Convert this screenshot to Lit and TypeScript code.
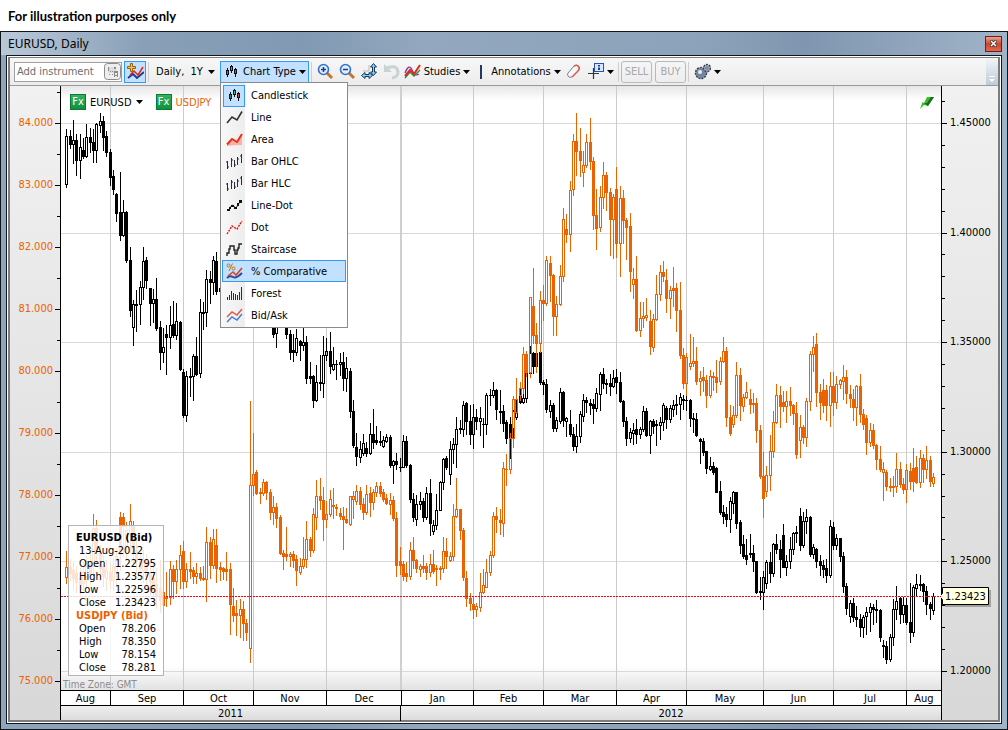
import { LitElement, html, css, svg, nothing } from "lit";
import type { SVGTemplateResult } from "lit";
import { customElement, property, state } from "lit/decorators.js";
import { classMap } from "lit/directives/class-map.js";

/* ---------- daily candles: direction, then high,top,bottom,low ---------- */

const EURUSD = `
u129,136,184,187 d130,136,144,148 u120,140,144,163 d134,140,160,175 u134,147,160,178 d138,150,156,158
u124,137,156,157 d128,137,142,152 d129,142,150,162 u123,124,150,162 u113,121,125,132 d116,121,137,150
d131,136,152,156 d149,152,177,185 d170,176,189,194 d193,194,213,221 d172,212,235,240 u200,212,235,236
d211,212,260,262 d247,260,310,316 u300,304,327,345 d290,304,305,331 u281,287,304,324 u247,261,287,299
d257,260,280,288 d288,288,303,325 u289,299,303,322 d278,299,328,330 d321,327,352,369 u328,347,352,362
d325,334,337,374 u306,325,337,348 d301,324,335,337 u303,321,335,339 d321,322,369,370 d369,372,415,417
u371,376,415,421 d368,376,377,396 u354,356,376,400 d337,356,374,375 u299,312,373,377 d302,312,313,329
u270,279,312,326 d271,279,282,303 u256,260,282,294 d252,261,291,294 d280,288,291,300 u262,270,290,296
u250,256,270,280 d246,256,268,275 u240,248,268,272 u225,230,248,255 d220,230,240,250 u210,216,240,246
u200,206,216,224 d196,206,222,230 d214,222,236,240 u212,220,236,242 d215,220,250,256 d244,250,272,280
d266,272,296,304 d290,296,312,318 d310,318,334,337 u306,312,333,347 d304,312,318,324 d306,314,320,326
d310,318,334,338 d330,334,352,359 d334,350,352,361 u329,338,352,355 d340,341,345,360 u328,342,345,350
d336,342,378,383 d362,376,378,383 d375,376,400,407 u365,382,400,401 d355,382,383,390 u336,355,383,397
u338,351,355,360 d332,351,366,373 u347,364,369,370 d360,364,364,379 u353,362,364,375 d352,362,378,390
u357,368,378,391 d368,371,411,417 d400,411,445,447 d433,447,456,465 u441,449,457,462 u434,443,453,455
d442,448,453,456 u423,434,453,454 d409,434,442,448 d426,440,442,444 d431,441,442,445 u436,440,446,447
u434,437,441,442 d435,437,465,467 u460,461,465,483 d453,461,464,469 d458,467,467,471 u435,441,467,467
d436,441,465,467 d464,465,499,502 d493,499,517,521 u495,504,519,525 u492,501,504,509 d498,501,517,521
u487,493,517,519 d479,493,523,535 u520,525,531,534 u494,510,525,529 u481,482,510,510 u458,459,482,489
d456,458,467,469 u441,449,474,484 u438,444,449,463 u417,429,444,467 d420,428,429,433 u401,405,429,436
d402,403,421,434 d405,421,434,444 u404,417,434,448 d409,417,421,429 u407,418,421,435 d418,424,424,447
u393,395,424,434 d389,395,395,405 u382,390,395,397 d389,390,409,419 d390,411,412,423 d405,411,423,431
d420,422,438,443 d417,424,438,458 u410,411,428,438 u395,412,417,419 d389,394,402,403 u393,398,402,403
u372,373,398,402 u346,353,373,376 d352,353,366,373 d352,353,366,370 d352,352,382,384 d380,382,384,394
d379,384,409,412 u400,405,411,417 d403,405,428,431 u417,420,428,431 u388,392,421,423 d391,392,420,426
u417,418,421,436 d410,424,434,436 d427,434,446,450 u424,436,446,452 u411,414,436,442 u394,400,416,421
d397,400,402,412 d399,403,405,414 d399,404,408,423 u388,393,408,411 u372,374,394,410 d368,374,383,388
d379,383,384,393 d374,383,386,395 u370,378,386,387 d369,377,382,393 d372,382,401,402 d400,401,421,426
d417,421,438,445 u428,432,438,442 u423,430,433,444 d419,429,434,443 u427,429,434,438 u406,411,429,431
d408,411,435,436 u420,421,435,453 d419,421,426,433 d420,424,425,445 u417,422,425,439 u403,405,422,430
d406,408,419,428 u405,408,419,422 u400,405,409,416 d395,404,405,414 u393,397,404,419 d395,399,400,409
d395,400,400,410 d399,400,418,426 d413,418,419,432 d413,419,435,436 d438,439,441,463 d438,441,452,455
d451,451,468,473 u457,466,469,470 d462,466,472,474 d467,468,492,492 d481,491,512,514 d505,512,516,523
d507,514,519,526 u497,501,519,532 u491,492,503,513 d492,492,523,528 d520,522,545,553 d535,544,556,558
d539,555,559,564 d534,553,554,557 d545,553,561,571 d561,561,592,593 d577,591,592,599 u571,577,592,609
u560,562,583,588 d552,562,573,582 u543,544,573,576 d534,544,549,553 d540,549,559,577 d524,535,567,567
u555,561,567,575 u537,549,561,568 u532,533,549,554 d526,532,533,542 d508,516,545,550 u512,521,545,547
u509,517,521,533 d516,517,554,556 u544,547,554,558 d548,549,561,567 d555,561,565,575 d560,565,569,577
d559,568,575,582 u520,526,575,577 d522,527,545,549 u534,538,545,549 d538,538,556,561 d552,556,586,592
d583,586,608,614 u600,603,616,622 d598,603,617,621 d606,617,619,626 d614,619,627,636 u615,617,627,637
u607,612,616,634 u603,607,612,631 d604,607,609,624 d600,609,610,622 d609,610,637,641 d640,645,646,657
d641,646,659,663 u634,637,659,661 u599,609,637,645 u586,601,609,619 d597,598,614,623 u597,605,614,622
d598,605,622,624 d583,622,632,642 u585,587,632,636 u574,584,588,596 d575,584,585,590 d583,584,591,601
d586,591,604,614 d602,604,608,619 u593,596,610,614`;

const USDJPY = `
u551,567,577,583 d559,567,573,580 d562,570,578,588 d566,573,582,592 d568,578,584,594 u562,572,583,590
u556,566,576,586 d552,564,574,584 u514,528,566,580 d520,528,552,566 d545,552,568,580 d556,566,576,586
u560,570,578,590 d562,572,580,588 u558,566,580,590 u548,556,572,584 d512,517,554,570 d513,517,526,556
u522,530,545,560 u504,521,534,552 d521,526,552,566 d540,550,560,572 d552,558,568,580 u550,562,570,582
d554,564,576,588 d560,572,582,594 d564,578,590,602 d568,584,596,608 d560,588,600,612 d560,592,605,607
d572,597,598,606 u561,569,597,604 d565,569,581,598 u560,569,581,593 u545,555,569,588 d541,551,581,588
u563,569,581,587 d552,569,571,578 d567,570,576,583 u563,573,576,583 d567,573,578,580 d566,578,579,580
u527,542,579,601 d537,542,565,578 u529,539,565,568 d529,545,568,582 d562,567,569,580 d567,568,571,579
d552,569,571,580 d563,569,604,634 d588,606,615,621 d600,613,615,635 u599,609,615,637 d601,609,623,640
d619,623,632,640 u401,485,648,662 u433,474,485,495 d470,472,493,494 d488,492,493,503 u479,482,493,495
d481,482,492,499 d489,492,512,519 u496,507,512,524 d503,507,518,527 d515,517,553,554 d550,553,556,569
d527,554,556,560 u552,554,556,566 d551,554,560,567 d555,559,570,585 u558,566,572,574 u537,559,566,568
u521,539,559,567 d537,539,550,556 u508,514,550,552 u480,496,517,529 d478,496,500,509 d487,500,519,540
u501,514,519,527 u490,499,514,516 d488,505,506,518 d504,507,508,515 d508,513,516,519 d507,516,519,549
d508,519,522,523 u496,496,524,525 u491,496,499,518 u485,491,501,504 d487,491,504,509 d498,504,512,519
u485,494,512,514 d487,493,502,516 u489,492,502,509 u482,486,492,496 d482,486,493,496 d489,492,499,501
d494,498,503,504 u493,500,504,514 d496,500,518,520 d512,518,565,576 d547,561,565,574 d561,564,576,580
d562,573,576,581 u542,550,576,579 d537,550,560,568 d559,560,568,572 u564,566,569,576 d555,566,568,572
d563,566,572,579 u554,564,572,576 d550,564,571,573 d565,568,569,585 d566,568,569,579 u537,551,568,572
d538,551,556,568 u552,556,560,561 u504,516,556,560 u478,509,516,517 d509,509,530,539 d528,530,577,580
d571,578,598,606 d593,598,603,610 d597,604,609,618 u603,606,609,616 u573,592,607,611 u569,585,592,593
u559,572,587,587 u551,555,572,575 u512,516,555,557 d507,516,519,532 d509,520,522,534 u462,468,523,536
d454,469,469,485 u433,438,469,473 u396,399,438,447 u378,399,412,413 u382,388,395,400 u347,354,388,393
d351,354,372,376 u297,297,372,377 d268,306,335,343 d323,335,343,372 u291,300,343,352 d285,300,303,320
u256,260,303,305 d256,263,275,301 d274,275,316,335 u296,304,316,335 u265,276,304,305 u208,219,276,281
d214,229,234,242 u181,190,234,251 u134,141,189,195 d113,141,151,175 d128,151,160,176 u151,165,172,186
u134,142,165,167 d118,142,161,169 d157,161,215,229 d189,215,228,249 u186,197,227,231 u162,175,197,208
d172,175,192,210 d188,192,219,255 u194,197,219,258 d167,189,243,257 u186,198,243,276 d190,198,220,243
d218,220,227,259 d213,226,271,291 u268,279,284,298 d256,279,330,331 u302,318,330,336 u302,316,318,327
u298,315,317,320 d310,321,346,354 u314,319,347,351 u275,294,319,320 u265,272,294,300 d261,272,276,281
d269,280,298,312 u286,290,298,318 d267,288,290,306 d283,288,310,331 d282,310,355,358 d348,355,383,388
u353,357,383,395 u334,363,366,369 u337,361,363,366 d347,361,381,384 u371,378,381,395 d367,377,380,391
d375,380,395,407 u370,376,395,397 d372,376,377,390 d360,377,382,392 u357,361,381,384 u337,351,361,362
d347,351,417,426 d405,417,433,435 u406,415,424,427 u362,375,415,417 d368,375,405,420 u394,397,406,411
u382,392,397,398 d389,399,404,413 d393,403,404,412 d398,403,430,442 d425,430,476,478 d452,476,498,517
u466,475,491,496 u435,451,475,490 u411,422,451,457 u384,395,422,423 d386,395,406,427 d391,402,406,411
u391,401,406,422 d387,401,405,415 d404,405,413,424 d402,413,454,458 u415,427,440,457 d425,427,437,443
u398,401,437,446 u351,354,401,410 u336,347,354,371 d333,344,392,406 d384,392,402,419 d379,390,405,412
d385,390,405,420 u372,386,405,426 d372,386,402,415 u376,384,402,408 u379,380,384,388 u365,377,381,399
d370,377,393,403 d385,394,398,407 d389,399,407,420 u385,386,407,425 d374,386,414,422 d409,414,424,429
d415,418,442,454 u423,430,442,446 d424,430,445,448 d444,445,459,469 d446,459,469,471 u462,469,472,500
d470,472,486,490 d478,486,487,491 d476,486,487,496 u453,469,486,492 d462,469,484,487 d478,484,489,493
u464,470,489,502 d463,471,481,489 d448,468,481,491 d456,467,482,483 u450,458,482,487 d454,458,469,482
u446,460,469,478 d456,460,481,486 u473,477,483,486`;

/* Turns a candle list into one path; bodies are 3 units wide, wicks 1. */
function candlePath(source: string): string {
  const box = (x: number, y: number, w: number, h: number) =>
    h > 0 ? `M${x} ${y}h${w}v${h}h${-w}z` : "";
  return source
    .trim()
    .split(/\s+/)
    .map((item, i) => {
      const x = Math.floor((200 + 10 * i) / 3);
      const [high, top, bottom, low] = item.slice(1).split(",").map(Number);
      const wicks = box(x, high, 1, top - high) + box(x, bottom + 1, 1, low - bottom);
      if (item[0] === "d" || bottom - top < 2) {
        return wicks + box(x - 1, top, 3, bottom - top + 1);
      }
      return (
        wicks +
        box(x - 1, top, 3, 1) +
        box(x - 1, bottom, 3, 1) +
        box(x - 1, top + 1, 1, bottom - top - 1) +
        box(x + 1, top + 1, 1, bottom - top - 1)
      );
    })
    .join("");
}

const range = (from: number, to: number, step: number) => {
  const out: number[] = [];
  for (let v = from; v <= to; v += step) out.push(Math.round(v));
  return out;
};

/* ---------- icons ---------- */

const candles = svg`
  <path d="M4.500 5v9M8.500 2v8M12.500 5v9" stroke="#111"/>
  <rect x="3.500" y="7.500" width="2" height="4" fill="#2a9a5a" stroke="#111"/>
  <rect x="7.500" y="3.500" width="2" height="4" fill="#35c46a" stroke="#111"/>
  <rect x="11.500" y="6.500" width="2" height="4" fill="#e03c3c" stroke="#111"/>`;

const bars = svg`<path d="M1.500 8v8M2 14h1M0 9h1M5.500 5v9M6 7h1M8.500 7v7M9 12h1M11.500 4v8M12 6h1M15.500 1v9M14 3h1" stroke="#2a2a4a" fill="none"/>`;

const ICONS: Record<string, SVGTemplateResult> = {
  candles,
  line: svg`<path d="M1 14 6 8l5 3 5-8.500" fill="none" stroke="#333" stroke-width="1.600"/>`,
  area: svg`<path d="M1 13 6 8l5 3 5-8v11q-8 0-15 1z" fill="#f9b0a8"/><path d="M1 13.500 6 8l5 3 5-8" fill="none" stroke="#e8301c" stroke-width="2"/>`,
  bars,
  linedot: svg`<path d="M2 14 6 8l4 3 5-8" fill="none" stroke="#111"/><path d="M1 12h3v2H1zM3 10h2v2H3zM5 8h3v2H5zM8 10h3v2H8zM11 6h2v3h-2zM13 3h3v3h-3z" fill="#111"/>`,
  dot: svg`<path d="M1 15 6 7l5 3 5-8" fill="none" stroke="#d11" stroke-width="1.400" stroke-dasharray="2 1"/>`,
  stairs: svg`<path d="M1 15v-3h2V8h1V5h4v4h1v4h2V9h1V7h1V3h3" fill="none" stroke="#222" stroke-width="1.400"/>`,
  comparative: svg`
    <path d="M1 15q3-3 6-1t9-4" fill="none" stroke="#2b4b9b" stroke-width="2"/>
    <path d="M2 13 7 9l3 3 6-7" fill="none" stroke="#e0401c" stroke-width="1.600"/>
    <circle cx="2.500" cy="2.500" r="1.500" fill="none" stroke="#b97a10"/><circle cx="7.500" cy="5.500" r="1.500" fill="none" stroke="#b97a10"/>
    <path d="M6.500.5 3 8" stroke="#b97a10"/>`,
  forest: svg`<path d="M1.500 12v3M3.500 10v5M5.500 6v9M7.500 8v7M9.500 9v6M11.500 10v5M13.500 7v8M15.500 2v13" stroke="#2a2a4a"/>`,
  bidask: svg`<path d="M1 10 6 5l5 3 5-6" fill="none" stroke="#e8553c" stroke-width="1.400"/><path d="M1 15 6 10l5 3 5-6" fill="none" stroke="#4a78d8" stroke-width="1.400"/>`,
  keyboard: svg`
    <rect x=".5" y=".5" width="16" height="16" rx="3" fill="#eee" stroke="#8c8c8c"/>
    <path d="M4 4h8v6H4z" fill="#ddd"/><path d="M4 4h1v4H4zM6 8h1v1H6zM8 8h1v1H8zM10 4h2v2h-2zM5 11h1v1H5zM8 11h1v1H8zM10 8h4v2h-4zM10 10h1v4h-1zM13 10h1v4h-1zM11 12h2v1h-2z" fill="#8a8a8a"/>`,
  addseries: svg`
    <path d="M1 15 6 11l4 4 7-6" fill="none" stroke="#223a8c" stroke-width="2"/>
    <path d="M3 12 7 8l4 4 5-8" fill="none" stroke="#e02818" stroke-width="1.500"/>
    <path d="M3.500.5h2v3h3v2h-3v3h-2v-3h-3v-2h3z" fill="#f6c55a" stroke="#9a6206"/>`,
  zoomin: svg`
    <path d="m10 10 5 5" stroke="#c07830" stroke-width="3"/><circle cx="6.500" cy="6.500" r="5" fill="#dff0ff" stroke="#3a70c4" stroke-width="1.600"/>
    <path d="M4 6.500h5M6.500 4v5" stroke="#1a3a9a" stroke-width="1.500"/>`,
  zoomout: svg`
    <path d="m10 10 5 5" stroke="#c07830" stroke-width="3"/><circle cx="6.500" cy="6.500" r="5" fill="#dff0ff" stroke="#3a70c4" stroke-width="1.600"/>
    <path d="M4 6.500h5" stroke="#1a3a9a" stroke-width="1.500"/>`,
  fit: svg`
    <path d="M2 8h6v-6" fill="none" stroke="#bbb"/>
    <path d="m12.500.5 3 3.500h-2v5h2l-3 3.500-3-3.500h2V4h-2z" fill="#8ad0f0" stroke="#123a5c"/>
    <path d="m.5 12.500 3.500-3v2h4v-2l3.500 3-3.500 3v-2H4v2z" fill="#8ad0f0" stroke="#123a5c"/>`,
  undo: svg`<path d="M4 5q10-4 11 4 0 5-6 6" fill="none" stroke="#c9d3d6" stroke-width="3"/><path d="M1 1v8h8z" fill="#c9d3d6"/>`,
  studies: svg`
    <path d="M1 10q4-10 7-3t7 4" fill="none" stroke="#8a3ab0" stroke-width="1.400"/>
    <path d="M1 15 6 9l4 4 6-6" fill="none" stroke="#2a8a4a" stroke-width="1.400"/>
    <path d="M1 13 6 7l4 4 6-9" fill="none" stroke="#e02818" stroke-width="2"/>`,
  eraser: svg`
    <path d="M3 10 9 3q3-2 5 1 1 2-1 4l-6 6q-3 1-4-1t0-3z" fill="#f4f6fb" stroke="#7080a0"/>
    <path d="M9 3q3-2 5 1 1 2-1 4l-6 6" fill="none" stroke="#d85a48" stroke-width="1.500"/>`,
  crosshair: svg`
    <path d="M1 10.500h11M6.500 5v11" stroke="#333" stroke-width="1.200"/><rect x="7.500" y=".5" width="9" height="8" fill="#d8e8ff" stroke="#2a50b8"/>
    <path d="M12 2v1.500M12 4.500V7" stroke="#1a3ab0" stroke-width="2"/>`,
  gears: svg`
    <circle cx="7" cy="10" r="5.500" fill="#8a98b0" stroke="#38424f" stroke-width="1.500" stroke-dasharray="2 1"/><circle cx="7" cy="10" r="4" fill="#74849e"/><circle cx="6" cy="9" r="2" fill="#e8edf4"/>
    <circle cx="13" cy="5" r="3.500" fill="#a6b2c6" stroke="#38424f" stroke-width="1.500" stroke-dasharray="2 1"/><circle cx="13" cy="5" r="1.200" fill="#fff" stroke="#556"/>`,
  bolt: svg`<path d="M15 2H8L5 8 3.500 7 1 14l4-4 4 1z" fill="#3cba2c"/><path d="M15 2h-3L8 8H5l4 3z" fill="#14701a"/>`,
};

const icon = (name: string) =>
  html`<svg class="icon" viewBox="0 0 17 17" width="17" height="17" aria-hidden="true">${ICONS[name]}</svg>`;

const arrow = html`<svg class="arrow" viewBox="0 0 7 4" width="7" height="4" aria-hidden="true"><path d="M0 0h7L3.500 4z" /></svg>`;

const glyphStyles = css`
  .icon,
  .arrow {
    display: block;
    flex: none;
  }
`;

/* ---------- chart type menu ---------- */

const CHART_TYPES: [string, string][] = [
  ["candles", "Candlestick"],
  ["line", "Line"],
  ["area", "Area"],
  ["bars", "Bar OHLC"],
  ["bars", "Bar HLC"],
  ["linedot", "Line-Dot"],
  ["dot", "Dot"],
  ["stairs", "Staircase"],
  ["comparative", "% Comparative"],
  ["forest", "Forest"],
  ["bidask", "Bid/Ask"],
];

@customElement("chart-type-menu")
export class ChartTypeMenu extends LitElement {
  @property() current = "Candlestick";
  @property() active = "% Comparative";

  static styles = [
    glyphStyles,
    css`
      :host {
        display: block;
      }
      .menu {
        list-style: none;
        margin: 0;
        padding: 1px;
        border: 1px solid #8a8a8a;
        background: linear-gradient(90deg, #f8f8f8, #ededed 24px, #fff 24px);
      }
      .item {
        display: grid;
        grid-template-columns: 22px 1fr;
        column-gap: 6px;
        align-items: center;
        width: 100%;
        height: 22px;
        padding: 0;
        border: 1px solid transparent;
        background: none;
        font: inherit;
        color: #000;
        text-align: left;
      }
      .item.active {
        border-color: #3399ff;
        background: #c2e0ff;
      }
      .glyph {
        display: grid;
        place-items: center;
        box-sizing: border-box;
        height: 22px;
        border: 1px solid transparent;
      }
      .glyph.current {
        border-color: #3399ff;
        background: #c2e0ff;
      }
    `,
  ];

  render() {
    return html`<ul class="menu" role="menu">
      ${CHART_TYPES.map(
        ([name, label]) => html`<li role="none">
          <button
            type="button"
            role="menuitem"
            class=${classMap({ item: true, active: label === this.active })}
            @mouseenter=${() => (this.active = label)}
            @click=${() =>
              this.dispatchEvent(new CustomEvent("pick", { detail: label }))}
          >
            <span class=${classMap({ glyph: true, current: label === this.current })}>${icon(name)}</span>
            <span>${label}</span>
          </button>
        </li>`
      )}
    </ul>`;
  }
}

/* ---------- price chart ---------- */

const MONTHS = ["Aug", "Sep", "Oct", "Nov", "Dec", "Jan", "Feb", "Mar", "Apr", "May", "Jun", "Jul", "Aug"];
const MONTH_LINES = [110, 183, 253, 326, 473, 543, 616, 686, 763, 833, 906];
const PRICE_LINES = [123, 233, 342, 452, 561, 671];

@customElement("price-chart")
export class PriceChart extends LitElement {
  static styles = [
    glyphStyles,
    css`
      :host {
        display: grid;
        grid-template-columns: 51px minmax(0, 1fr) 57px;
        grid-template-rows: 604px auto;
      }
      .axis {
        grid-row: 1 / 3;
        display: flex;
        background: linear-gradient(#f1f1f1, #d8d8d8);
      }
      .left {
        border-right: 1px solid #000;
      }
      .right {
        grid-column: 3;
        border-left: 1px solid #000;
      }
      .axis svg {
        width: 100%;
        height: 604px;
        overflow: visible;
        font-size: 11px;
      }
      .plot {
        position: relative;
        background: linear-gradient(#e6e6e6, #fff 14px, #fff 580px, #e2e2e2);
      }
      .plot > svg {
        display: block;
        width: 100%;
        height: 604px;
      }
      .black {
        fill: #000;
      }
      .orange {
        fill: #ec6200;
      }
      .legend {
        position: absolute;
        top: 8px;
        left: 9px;
        display: flex;
        gap: 13px;
      }
      .symbol {
        display: flex;
        align-items: center;
        gap: 4px;
        padding: 0;
        border: 0;
        background: none;
        font: inherit;
        color: #000;
      }
      .symbol.second {
        color: #ec6200;
      }
      .fx {
        width: 14px;
        height: 14px;
        border: 1px solid #0b7a34;
        background: linear-gradient(#35b25d, #119040);
        color: #fff;
        line-height: 14px;
        text-align: center;
      }
      .bolt {
        position: absolute;
        top: 9px;
        right: 5px;
      }
      .zone {
        position: absolute;
        bottom: 0;
        left: 2px;
        font-size: 10px;
        line-height: 10px;
        color: #8c8c8c;
      }
      .info {
        position: absolute;
        bottom: 14px;
        left: 7px;
        box-sizing: border-box;
        width: 96px;
        padding: 5px 7px 1px;
        border: 1px solid #b4b4b4;
        background: rgba(255, 255, 255, 0.82);
        line-height: 13px;
        white-space: nowrap;
      }
      .info table {
        width: 100%;
        border-collapse: collapse;
      }
      .info caption {
        font-weight: bold;
        text-align: left;
      }
      .info .second caption {
        color: #ec6200;
      }
      .info th {
        padding: 0 0 0 3px;
        font-weight: normal;
        text-align: left;
      }
      .info td {
        padding: 0;
        text-align: right;
      }
      .time {
        text-align: center;
        line-height: 15px;
      }
      .months,
      .years {
        display: grid;
        border-top: 1px solid #000;
        height: 14px;
      }
      .months {
        grid-template-columns: 50fr 73fr 70fr 73fr 75fr 72fr 70fr 73fr 70fr 77fr 70fr 73fr 34fr;
        background: #fff;
      }
      .years {
        grid-template-columns: 340fr 540fr;
        background: linear-gradient(#efefef, #dcdcdc);
      }
      .cell {
        border-right: 1px solid #000;
        min-width: 0;
      }
      .cell:last-child {
        border-right: 0;
      }
    `,
  ];

  private quote(name: string, second: boolean, date: string, rows: [string, string][]) {
    return html`<table class=${second ? "second" : "first"}>
      <caption>${name}</caption>
      ${date ? html`<tr><th colspan="2">${date}</th></tr>` : nothing}
      ${rows.map(([k, v]) => html`<tr><th scope="row">${k}</th><td>${v}</td></tr>`)}
    </table>`;
  }

  render() {
    return html`
      <div class="axis left">
        <svg viewBox="10 86 50 604">
          ${range(92, 690, 31).map((y) => {
            const major = (y - 123) % 62 === 0;
            return svg`<rect x=${major ? 55 : 57} y=${y} width=${major ? 5 : 3} height="1"/>`;
          })}
          ${range(0, 9, 1).map(
            (i) => svg`<text class="orange" x="53" y=${126 + i * 62} text-anchor="end">${84 - i}.000</text>`
          )}
        </svg>
      </div>
      <div class="plot">
        <svg viewBox="61 86 880 604" preserveAspectRatio="none" shape-rendering="crispEdges">
          ${PRICE_LINES.map((y) => svg`<rect x="61" y=${y} width="880" height="1" fill="#d9d9d9"/>`)}
          ${MONTH_LINES.map((x) => svg`<rect x=${x} y="86" width="1" height="604" fill="#cbcbcb"/>`)}
          <rect x="400" y="86" width="2" height="604" fill="#cfcfcf" />
          <path class="black" d=${candlePath(EURUSD)} />
          <path class="orange" d=${candlePath(USDJPY)} />
          <path d="M61 596.5H941" stroke="#ff0010" stroke-dasharray="2 1" />
        </svg>
        <div class="legend">
          <button type="button" class="symbol"><span class="fx">Fx</span>EURUSD ${arrow}</button>
          <button type="button" class="symbol second"><span class="fx">Fx</span>USDJPY</button>
        </div>
        <span class="bolt">${icon("bolt")}</span>
        <div class="info">
          ${this.quote("EURUSD (Bid)", false, "13-Aug-2012", [
            ["Open", "1.22795"],
            ["High", "1.23577"],
            ["Low", "1.22596"],
            ["Close", "1.23423"],
          ])}
          ${this.quote("USDJPY (Bid)", true, "", [
            ["Open", "78.206"],
            ["High", "78.350"],
            ["Low", "78.154"],
            ["Close", "78.281"],
          ])}
        </div>
        <span class="zone">Time Zone: GMT</span>
      </div>
      <div class="axis right">
        <svg viewBox="942 86 56 604">
          ${range(101, 690, 21.92).map((y, i) => {
            const major = i % 5 === 1;
            return svg`<rect x="942" y=${y} width=${major ? 5 : 3} height="1"/>`;
          })}
          ${PRICE_LINES.map(
            (y, i) => svg`<text x="950" y=${y + 3}>${(1.45 - i * 0.05).toFixed(5)}</text>`
          )}
          <rect x="945" y="590" width="46" height="17" fill="#888" opacity=".7" />
          <path d="M939.500 596.500l3-3V587.500h46v17h-46v-5z" fill="#ffffe1" stroke="#000" />
          <text x="945" y="600">1.23423</text>
        </svg>
      </div>
      <div class="time">
        <div class="months">${MONTHS.map((m) => html`<span class="cell">${m}</span>`)}</div>
        <div class="years"><span class="cell">2011</span><span class="cell">2012</span></div>
      </div>
    `;
  }
}

/* ---------- window ---------- */

@customElement("app-root")
export class AppRoot extends LitElement {
  @state() private menuOpen = true;
  @state() private chartType = "Candlestick";

  static styles = [
    glyphStyles,
    css`
      :host {
        display: block;
        font: 11px "DejaVu Sans Condensed", "DejaVu Sans", sans-serif;
        font-stretch: condensed;
        color: #000;
        background: #fff;
      }
      .note {
        margin: 0;
        padding: 2px 8px 0;
        font: bold 12px/29px Lato, "Open Sans", sans-serif;
        font-size: 13px;
      }
      .window {
        border: 1px solid #10161c;
        background: linear-gradient(90deg, #8fa5bb, #8199b3 30%, #93a8be 42%, #8ba2ba 70%, #8096b0 80%, #a0b4c8);
      }
      .titlebar {
        display: flex;
        align-items: center;
        justify-content: space-between;
        height: 23px;
        padding: 0 5px 0 7px;
        background: linear-gradient(90deg, rgba(214, 224, 234, 0.6), rgba(214, 224, 234, 0) 140px);
      }
      .title {
        margin: 0;
        font: 12px "Noto Sans", "Open Sans", sans-serif;
      }
      .close {
        display: grid;
        place-items: center;
        width: 17px;
        height: 16px;
        padding: 0;
        border: 1px solid #6a2018;
        background: linear-gradient(#eda090, #d0442c 50%, #e0684c);
      }
      .frame {
        margin: 0 5px 5px;
        padding: 1px;
        border: 1px solid #10161c;
        background: #fff;
      }
      .content {
        border: solid #7d7d7d;
        border-width: 1px 2px 2px;
      }
      .toolbar {
        display: flex;
        align-items: center;
        height: 27px;
        padding-left: 4px;
        border-bottom: 1px solid #9a9a9a;
        background: linear-gradient(#f7f7f7, #ececec);
      }
      .search {
        display: flex;
        align-items: center;
        box-sizing: border-box;
        width: 108px;
        height: 20px;
        border: 1px solid #a0a0a0;
        background: #fff;
      }
      .search input {
        flex: 1;
        min-width: 0;
        padding: 0 2px;
        border: 0;
        outline: 0;
        background: none;
        font: inherit;
      }
      .search input::placeholder {
        color: #6d6d6d;
        opacity: 1;
      }
      .tool {
        display: inline-flex;
        align-items: center;
        justify-content: center;
        flex: none;
        gap: 3px;
        box-sizing: border-box;
        height: 22px;
        padding: 0;
        border: 1px solid transparent;
        background: none;
        font: inherit;
        color: #000;
        white-space: nowrap;
      }
      .tool.on {
        border-color: #3399ff;
        background: #c2e0ff;
      }
      .tool.add {
        width: 22px;
        margin-left: 2px;
      }
      .tool.period {
        width: 69px;
        gap: 5px;
      }
      .tool.type {
        width: 89px;
      }
      .tool.small {
        width: 22px;
      }
      .tool.studies {
        width: 70px;
      }
      .tool.notes {
        width: 72px;
      }
      .tool.cross {
        width: 32px;
      }
      .tool.trade {
        width: 31px;
        border: 1px solid #b9b9b9;
        border-radius: 3px;
        color: #a8a8a8;
      }
      .trade + .trade {
        margin-left: 3px;
      }
      .sep {
        flex: none;
        width: 1px;
        height: 20px;
        margin: 0 2px;
        background: #cfcfcf;
      }
      .bar {
        flex: none;
        width: 2px;
        height: 14px;
        margin: 0 8px;
        background: #1f3b63;
      }
      .anchor {
        position: relative;
        display: flex;
        flex: none;
      }
      .popup {
        position: absolute;
        z-index: 2;
        top: 21px;
        left: 0;
        width: 128px;
      }
      .more {
        align-self: stretch;
        display: flex;
        align-items: flex-end;
        width: 12px;
        margin-left: auto;
        padding: 0 3px 3px;
        border: 0;
        box-sizing: border-box;
        background: linear-gradient(#f2f5f8, #bfccd8);
      }
    `,
  ];

  private pick(e: CustomEvent<string>) {
    this.chartType = e.detail;
    this.menuOpen = false;
  }

  render() {
    return html`
      <p class="note">For illustration purposes only</p>
      <section class="window">
        <header class="titlebar">
          <h1 class="title">EURUSD, Daily</h1>
          <button type="button" class="close" aria-label="Close">
            <svg viewBox="0 0 7 7" width="7" height="7"><path d="m.5.5 6 6m0-6-6 6" stroke="#333" stroke-width="3" /><path d="m1 1 5 5m0-5L1 6" stroke="#fff" stroke-width="1.500" /></svg>
          </button>
        </header>
        <div class="frame">
          <div class="content">
            <nav class="toolbar">
              <label class="search">
                <input type="text" placeholder="Add instrument" aria-label="Add instrument" />${icon("keyboard")}
              </label>
              <button type="button" class="tool on add" aria-label="Add series">${icon("addseries")}</button>
              <span class="sep"></span>
              <button type="button" class="tool period">Daily,&nbsp; 1Y ${arrow}</button>
              <div class="anchor">
                <button
                  type="button"
                  class=${classMap({ tool: true, type: true, on: this.menuOpen })}
                  aria-haspopup="menu"
                  aria-expanded=${this.menuOpen}
                  @click=${() => (this.menuOpen = !this.menuOpen)}
                >${icon("candles")} Chart Type ${arrow}</button>
                ${this.menuOpen
                  ? html`<chart-type-menu class="popup" .current=${this.chartType} @pick=${this.pick}></chart-type-menu>`
                  : nothing}
              </div>
              <span class="sep"></span>
              <button type="button" class="tool small" aria-label="Zoom in">${icon("zoomin")}</button>
              <button type="button" class="tool small" aria-label="Zoom out">${icon("zoomout")}</button>
              <button type="button" class="tool small" aria-label="Fit">${icon("fit")}</button>
              <button type="button" class="tool small" aria-label="Undo">${icon("undo")}</button>
              <button type="button" class="tool studies">${icon("studies")} Studies ${arrow}</button>
              <span class="bar"></span>
              <button type="button" class="tool notes">Annotations ${arrow}</button>
              <button type="button" class="tool small" aria-label="Erase">${icon("eraser")}</button>
              <button type="button" class="tool cross" aria-label="Crosshair">${icon("crosshair")} ${arrow}</button>
              <span class="sep"></span>
              <button type="button" class="tool trade" disabled>SELL</button>
              <button type="button" class="tool trade" disabled>BUY</button>
              <span class="sep"></span>
              <button type="button" class="tool cross" aria-label="Settings">${icon("gears")} ${arrow}</button>
              <button type="button" class="more" aria-label="More tools">
                <svg viewBox="0 0 6 6" width="6" height="6"><path d="M0 0h6v1H0zM0 3h6L3 6z" fill="#fff" /></svg>
              </button>
            </nav>
            <price-chart></price-chart>
          </div>
        </div>
      </section>
    `;
  }
}
